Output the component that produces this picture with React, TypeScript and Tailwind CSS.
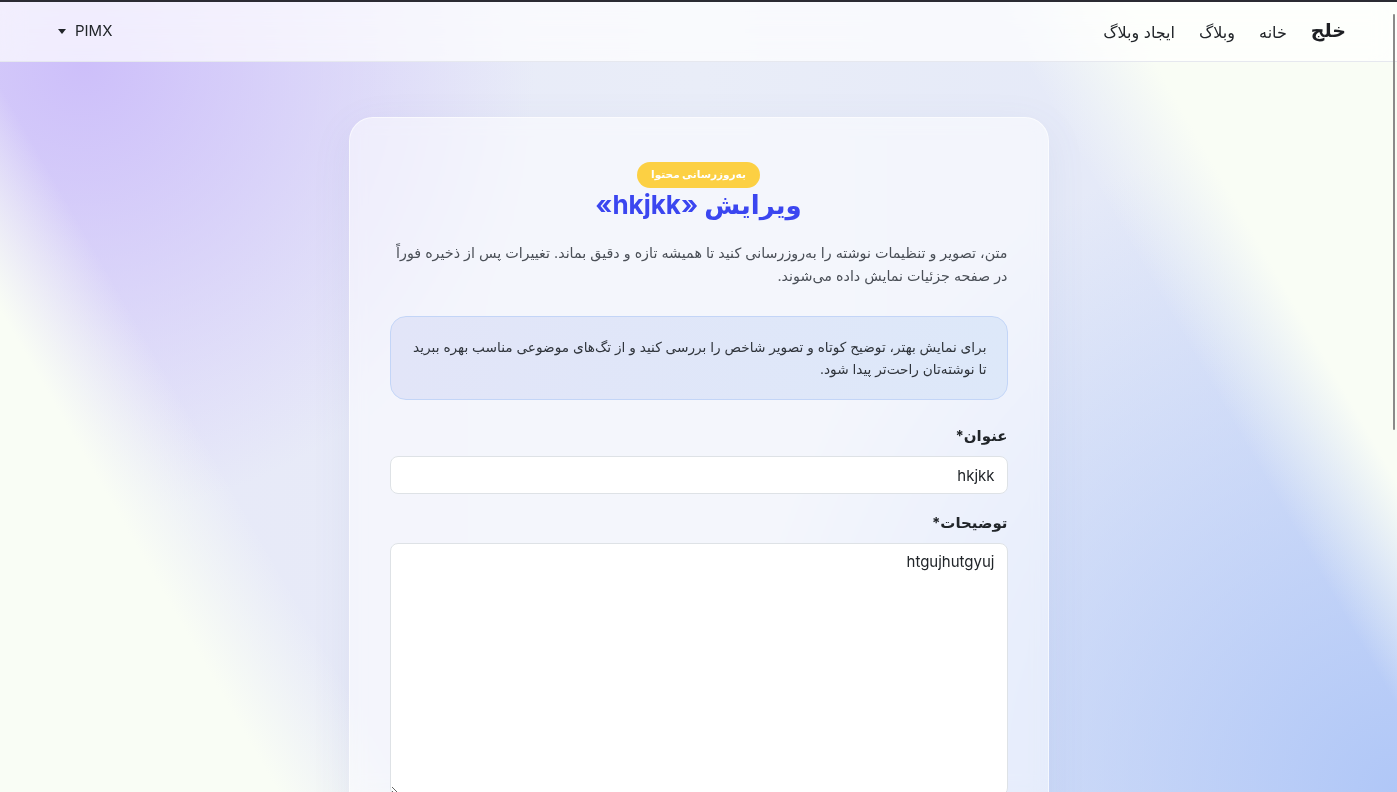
export default function App() {
  return (
    <div
      dir="rtl"
      className="relative h-screen overflow-hidden font-['Inter','DejaVu_Sans',sans-serif] text-[#212529] bg-[linear-gradient(60deg,#f9fdf5_15%,rgba(249,253,245,0)_22%,rgba(249,253,245,0)_78%,#f9fdf5_85%),radial-gradient(circle_at_6%_8%,#cdbffa,rgba(205,191,250,0)_30%),radial-gradient(circle_at_100%_100%,#b0c7f7,rgba(176,199,247,0)_42%),linear-gradient(90deg,#e6e8f8,#e9edf8_50%,#e2e7f8)]"
    >
      {/* top bar */}
      <nav className="border-t-2 border-t-[#2b2b33] border-b border-b-[#e6e8ef] bg-white/70 backdrop-blur-md">
        <div className="flex h-[59px] items-center justify-between pl-[58px] pr-[51px]">
          <div className="flex items-center gap-6 text-[16px]">
            <span className="text-[19px] font-bold text-[#1d1f23]">خلج</span>
            <a className="text-[#212529]">خانه</a>
            <a className="text-[#212529]">وبلاگ</a>
            <a className="text-[#212529]">ایجاد وبلاگ</a>
          </div>
          <div dir="ltr" className="flex items-center gap-[9px] text-[15px] text-[#212529]">
            <span className="h-0 w-0 border-x-[4px] border-t-[5px] border-x-transparent border-t-[#212529]" />
            <span>PIMX</span>
          </div>
        </div>
      </nav>

      {/* content */}
      <main className="flex justify-center pt-[55px]">
        <section className="w-[700px] rounded-[24px] border border-white/60 bg-white/50 px-10 pt-[44px] pb-10 shadow-[0_10px_40px_rgba(90,100,160,0.08)] backdrop-blur-sm">
          <div className="flex flex-col items-center">
            <span className="rounded-full bg-[#fcd043] px-[14px] py-[5px] text-[10.5px] font-bold leading-4 text-white">
              به‌روزرسانی محتوا
            </span>
            <h1 className="mt-[-1px] text-[26px] font-bold leading-9 text-[#3b46f0]">ویرایش «hkjkk»</h1>
          </div>

          <p className="mt-[18px] whitespace-nowrap text-[14.3px] leading-[23px] text-[#4a4f57]">
            متن، تصویر و تنظیمات نوشته را به‌روزرسانی کنید تا همیشه تازه و دقیق بماند. تغییرات پس از ذخیره فوراً
            <br />
            در صفحه جزئیات نمایش داده می‌شوند.
          </p>

          <div className="mt-[29px] whitespace-nowrap rounded-2xl border border-[#c3d5f7] bg-[linear-gradient(90deg,#e2e5f8,#dde8f9)] px-5 py-[19px] text-[13.7px] leading-[22px] text-[#2f343b]">
            برای نمایش بهتر، توضیح کوتاه و تصویر شاخص را بررسی کنید و از تگ‌های موضوعی مناسب بهره ببرید
            <br />
            تا نوشته‌تان راحت‌تر پیدا شود.
          </div>

          <label className="mt-[24px] block text-[15px] font-bold leading-6 text-[#212529]">عنوان*</label>
          <input
            readOnly
            value="hkjkk"
            className="mt-[8px] block h-[38px] w-full rounded-lg border border-[#dee2e6] bg-white px-3 text-[15px] text-[#212529] outline-none"
          />

          <label className="mt-[17px] block text-[15px] font-bold leading-6 text-[#212529]">توضیحات*</label>
          <textarea
            readOnly
            value="htgujhutgyuj"
            className="mt-[8px] block h-[253px] w-full resize-y rounded-lg border border-[#dee2e6] bg-white px-3 py-[6px] text-[15px] leading-6 text-[#212529] outline-none"
          />
        </section>
      </main>

      {/* overlay scrollbar thumb */}
      <div className="absolute right-[2px] top-[14px] h-[416px] w-[2px] rounded-full bg-[#8a8a8a]" />
    </div>
  );
}
